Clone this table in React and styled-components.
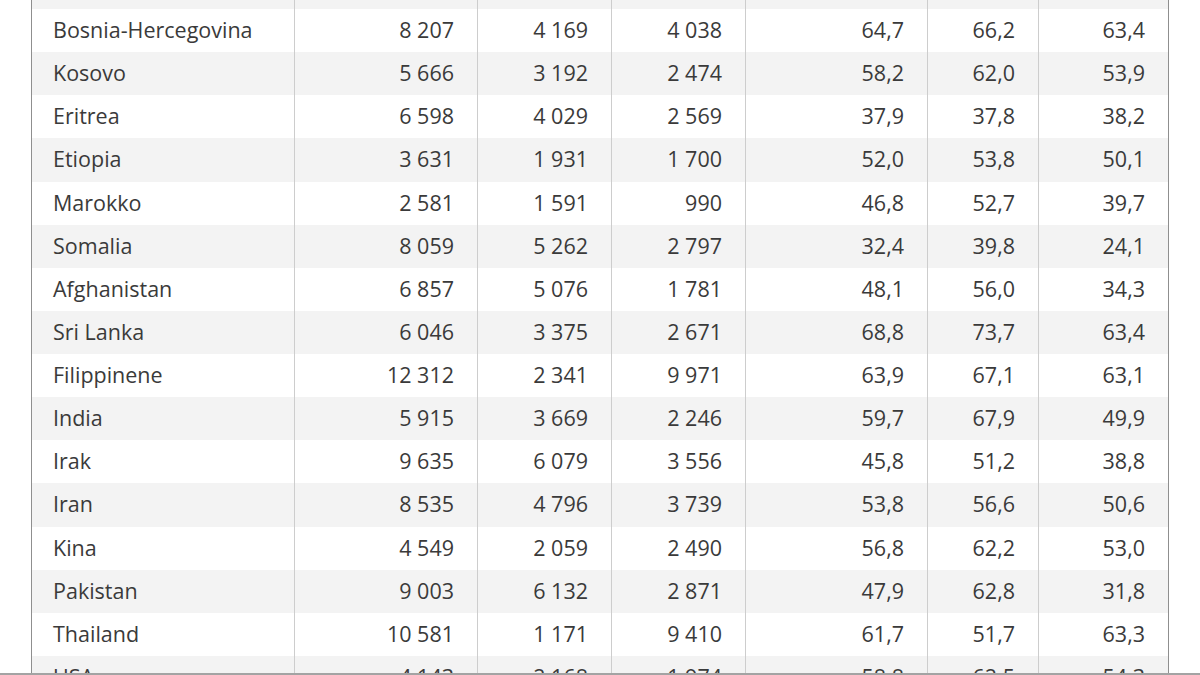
import React from 'react';
import styled, { createGlobalStyle } from 'styled-components';

const GlobalStyle = createGlobalStyle`
    html, body {
        margin: 0;
        padding: 0;
        background: #ffffff;
        overflow: hidden;
    }
`;

const Page = styled.div`
    width: 1200px;
    height: 675px;
    padding: 0 31px;
    box-sizing: border-box;
    overflow: hidden;
    font-family: "Open Sans", "Noto Sans", sans-serif;
`;

const Table = styled.div`
    margin-top: -34.14px;
    border-left: 1px solid #8f8f8f;
    border-right: 1px solid #8f8f8f;
`;

const Row = styled.div`
    display: grid;
    grid-template-columns: 262px 183px 134px 134px 182px 111px 130px;
    height: 43.14px;
    background: ${p => (p.striped ? '#f3f3f3' : '#ffffff')};
`;

const Cell = styled.div`
    display: flex;
    align-items: center;
    justify-content: ${p => (p.name ? 'flex-start' : 'flex-end')};
    padding: ${p => (p.name ? '0 0 2px 21px' : '0 23px 2px 0')};
    border-left: ${p => (p.name ? '0' : '1px solid #cdcdcd')};
    font-size: 21.5px;
    color: #3a3a3a;
    white-space: nowrap;
`;

const BottomEdge = styled.div`
    position: fixed;
    left: 0;
    right: 0;
    bottom: 0;
    height: 2px;
    background: #a3a3a3;
`;

const rows = [
    ['', '', '', '', '', '', ''],
    ['Bosnia-Hercegovina', '8 207', '4 169', '4 038', '64,7', '66,2', '63,4'],
    ['Kosovo', '5 666', '3 192', '2 474', '58,2', '62,0', '53,9'],
    ['Eritrea', '6 598', '4 029', '2 569', '37,9', '37,8', '38,2'],
    ['Etiopia', '3 631', '1 931', '1 700', '52,0', '53,8', '50,1'],
    ['Marokko', '2 581', '1 591', '990', '46,8', '52,7', '39,7'],
    ['Somalia', '8 059', '5 262', '2 797', '32,4', '39,8', '24,1'],
    ['Afghanistan', '6 857', '5 076', '1 781', '48,1', '56,0', '34,3'],
    ['Sri Lanka', '6 046', '3 375', '2 671', '68,8', '73,7', '63,4'],
    ['Filippinene', '12 312', '2 341', '9 971', '63,9', '67,1', '63,1'],
    ['India', '5 915', '3 669', '2 246', '59,7', '67,9', '49,9'],
    ['Irak', '9 635', '6 079', '3 556', '45,8', '51,2', '38,8'],
    ['Iran', '8 535', '4 796', '3 739', '53,8', '56,6', '50,6'],
    ['Kina', '4 549', '2 059', '2 490', '56,8', '62,2', '53,0'],
    ['Pakistan', '9 003', '6 132', '2 871', '47,9', '62,8', '31,8'],
    ['Thailand', '10 581', '1 171', '9 410', '61,7', '51,7', '63,3'],
    ['USA', '4 143', '2 168', '1 974', '58,8', '62,5', '54,3'],
];

const App = () => {
    return (
        <Page>
            <GlobalStyle />
            <Table>
                {rows.map((row, i) => (
                    <Row key={i} striped={i % 2 === 0}>
                        {row.map((value, j) => (
                            <Cell key={j} name={j === 0}>{value}</Cell>
                        ))}
                    </Row>
                ))}
            </Table>
            <BottomEdge />
        </Page>
    );
};

export default App;
